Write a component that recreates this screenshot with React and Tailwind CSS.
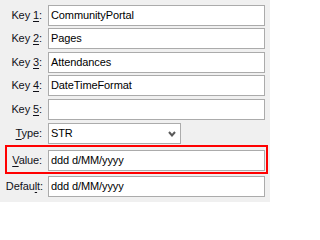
const font = { fontFamily: '"Liberation Sans", Arial, sans-serif' };

const Field = ({ value, ml = "ml-[6px]" }) => (
  <div className={`flex items-center w-[217px] h-[21px] ${ml} bg-white border border-[#ababab] pl-[2px] text-black`}>
    {value}
  </div>
);

const Label = ({ pre, acc, post, w = "w-[42px]" }) => (
  <div className={`${w} text-right text-[#101018] shrink-0`}>
    {pre}
    <span className="underline underline-offset-2 decoration-1">{acc}</span>
    {post}
  </div>
);

const Row = ({ pre, acc, post, value, mt }) => (
  <div className={`flex items-center ${mt}`}>
    <Label pre={pre} acc={acc} post={post} />
    <Field value={value} />
  </div>
);

export default function App() {
  return (
    <div
      className="w-[270px] h-[202px] bg-[#f0f0f0] flex flex-col text-[11px] tracking-[-0.1px] leading-none overflow-hidden"
      style={font}
    >
      <Row pre="Key " acc="1" post=":" value="CommunityPortal" mt="mt-[5px]" />
      <Row pre="Key " acc="2" post=":" value="Pages" mt="mt-[2px]" />
      <Row pre="Key " acc="3" post=":" value="Attendances" mt="mt-[3px]" />
      <Row pre="Key " acc="4" post=":" value="DateTimeFormat" mt="mt-[2px]" />
      <Row pre="Key " acc="5" post=":" value="" mt="mt-[3px]" />

      <div className="flex items-center mt-[3px]">
        <Label pre="" acc="T" post="ype:" />
        <div className="flex items-center justify-between w-[133px] h-[21px] ml-[6px] bg-white border border-[#acacac] pl-[2px] pr-[4px] text-black">
          <span>STR</span>
          <svg width="8" height="6" viewBox="0 0 8 6">
            <polyline
              points="1,1 4,4.5 7,1"
              fill="none"
              stroke="#5a5a5a"
              strokeWidth="2"
            />
          </svg>
        </div>
      </div>

      <div className="flex items-center ml-[5px] w-[263px] h-[29px] mt-[1px] border-2 border-[#ff0000] pt-[2px] pr-[1px]">
        <Label pre="" acc="V" post="alue:" w="w-[35px]" />
        <Field value="ddd d/MM/yyyy" />
      </div>

      <div className="flex items-center mt-[2px]">
        <Label pre="Defau" acc="l" post="t:" w="w-[43px]" />
        <Field value="ddd d/MM/yyyy" ml="ml-[5px]" />
      </div>
    </div>
  );
}
